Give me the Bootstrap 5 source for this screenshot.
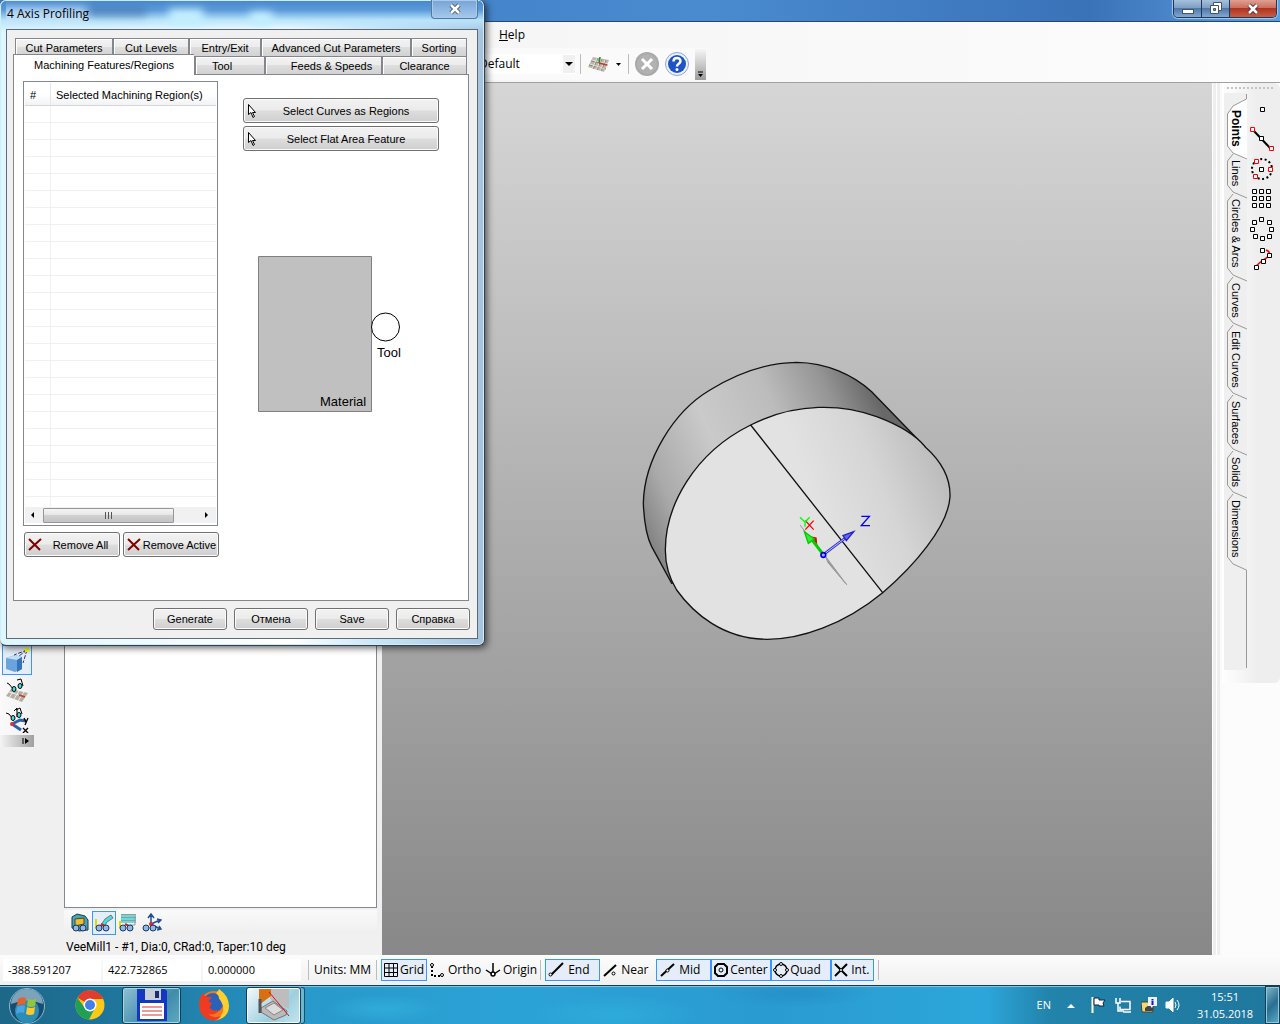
<!DOCTYPE html>
<html lang="en">
<head>
<meta charset="utf-8">
<meta name="viewport" content="width=device-width, initial-scale=1">
<title>4 Axis Profiling</title>
<link href="https://cdn.jsdelivr.net/npm/bootstrap@5.3.0/dist/css/bootstrap.min.css" rel="stylesheet">
<style>
body{font:12px/16px "Open Sans","Noto Sans",sans-serif;color:#000;background:#f0f0f0;min-height:100vh;overflow:hidden}
svg{display:block;flex:none}
button,input,select{font:inherit;color:inherit}
.plain{border:0;background:none;padding:0}
.main-title{height:22px;background:linear-gradient(90deg,#3f78bd,#4585cb 40%,#4a8bd0 55%,#3a72b8 85%,#5d9ede);border-bottom:1px solid #27456d;padding-right:3px}
.win-ctl{height:18px;border:1px solid #1f3858;border-top:0;border-radius:0 0 5px 5px;overflow:hidden;box-shadow:0 0 1px 1px #a9cbee}
.win-ctl button{border:0;padding:0;width:28px;height:17px;display:flex;align-items:center;justify-content:center;background:linear-gradient(#a6c0dc,#7f9fc4 45%,#4f77a8 50%,#82a8d2);border-right:1px solid #1f3858}
.win-ctl button:last-child{width:46px;border:0;background:linear-gradient(#dfa093,#cc6f5e 45%,#b03420 50%,#c95c42)}
.menu-row{height:26px;padding-left:499px;background:linear-gradient(90deg,#f2f2f2,#fcfcfc)}
.menu-row a{color:#000;text-decoration:none}
.tool-row{height:35px;padding-left:470px;background:linear-gradient(90deg,#f2f2f2,#fcfcfc);border-bottom:1px solid #a0a0a0}
.tool-set{height:32px;background:#fafafa}
.combo{position:relative;width:106px;height:20px}
.combo select{appearance:none;border:0;background:#fff;width:100%;height:20px;padding:0 0 0 9px;line-height:18px}
.combo svg{position:absolute;right:1px;top:1px;background:#f0f0f0;pointer-events:none}
.vsep{width:1px;background:#bdbdbd;height:20px}
.gap-left{margin-left:6px}
.overflow-tab{width:11px;height:31px;background:linear-gradient(#f6f6f6,#9c9c9c)}
.side-bar{width:35px;padding-top:562px;background:linear-gradient(90deg,#fafafa,#f0f0f0)}
.side-bar button,.view-bar button{display:flex;align-items:center;justify-content:center}
.on{border:1px solid #3399ff!important;background:#e4edf8!important}
.side-tools{padding-left:2px}
.side-bar button{width:30px;height:30px}
.grip-end{width:34px;height:12px;background:linear-gradient(90deg,#f4f4f4,#a0a0a0)}
.tree-col{width:313px;margin:0 5px 0 29px}
.tree-box{border:1px solid #828790;background:#fff}
.view-bar{height:25px;margin-top:2px;background:linear-gradient(#fafafa,#eee)}
.view-bar button{width:24px;height:24px}
.tool-info{font-family:Roboto,sans-serif;padding:4px 0 0 2px}
.scene{background:linear-gradient(#d6d6d6,#888);overflow:hidden}
.stripes{width:10px;background:linear-gradient(90deg,#fff 0 1px,#eee 1px 4px,#fff 4px 5px,#eee 5px 8px,#fafafa 8px)}
.right-dock{width:58px;background:#fcfcfc}
.dock-in{height:600px;background:linear-gradient(90deg,#fff,#eee 60%);border-radius:0 6px 6px 0}
.dots{height:2px;margin:4px 6px 4px 5px;background:repeating-linear-gradient(90deg,#c4c4c4 0 2px,transparent 2px 4px)}
.vtabs{position:relative;width:23px;height:577px;margin-left:2px;background:#efefef;font:11px/13px "Liberation Sans",sans-serif}
.vtabs>svg{position:absolute;left:0;top:0}
.vtabs button{position:relative;writing-mode:vertical-rl;width:23px;padding:6px 0 0;text-align:left;border:0;background:none;display:block;line-height:21px;white-space:nowrap}
.vtabs button:nth-of-type(1){height:61px;padding-top:17px;font-weight:700;font-size:12px}
.vtabs button:nth-of-type(2){height:39px}
.vtabs button:nth-of-type(3){height:84px}
.vtabs button:nth-of-type(4){height:48px}
.vtabs button:nth-of-type(5){height:70px}
.vtabs button:nth-of-type(6){height:56px}
.vtabs button:nth-of-type(7){height:43px}
.vtabs button:nth-of-type(8){height:76px}
.pts{padding-top:1px}
.pts button{width:30px;height:30px;display:flex;align-items:center;justify-content:center}
.status{height:30px;padding:0 0 1px 3px;background:linear-gradient(#fcfcfc,#f0f0f0)}
.coords{gap:2px;font-size:11px;margin-right:3px}
.status input{border:0;background:#fff;width:98px;height:22px;padding:0 5px}
.units{width:67px}
.snap{height:22px;border:1px solid transparent;background:none;padding:0 2px;display:flex;align-items:center;gap:2px;white-space:nowrap}
.s-free{width:55px;gap:4px}
.s-near{width:56px}
.s-ctr{width:60px;padding:0 1px;gap:1px}
.s-int{width:43px;padding:0 1px}
.taskbar{height:39px;border-top:1px solid #123c50;box-shadow:inset 0 1px #7fc4e2;background:radial-gradient(ellipse 60px 14px at 30% 60%,#30acd9,transparent),radial-gradient(ellipse 90px 20px at 48% 75%,#2eabda,transparent),radial-gradient(ellipse 80px 14px at 62% 20%,#2591c8,transparent),linear-gradient(90deg,#1d6788,#1f7aa2 12%,#2899cb 24%,#2ba2d6 40%,#2a9bd0 60%,#2ca6da 77%,#2283ab 82%,#1f779d);color:#fff}
.tb-app{width:59px;height:37px;margin-left:3px;display:flex;align-items:center;justify-content:center;border-radius:3px}
.tb-first{margin-left:14px}
.tb-open{border:1px solid #123f55;background:linear-gradient(135deg,#8fc0d4,#3f8cab 60%,#5fa9c4);box-shadow:inset 0 0 0 1px #a5d5e6}
.tb-cur{width:55px;border:1px solid #123f55;background:linear-gradient(135deg,#f4fafc,#9ecfe0 60%,#c2e6f0);box-shadow:inset 0 0 0 1px #fff}
.tb-stack{width:4px;height:37px;border:1px solid #15526d;border-left:0;border-radius:0 3px 3px 0;background:#6fb5cf}
.peek{width:15px;height:38px;border:1px solid #123f55;background:linear-gradient(135deg,#87b4c8,#286f90 50%,#5fa9c6);box-shadow:inset 0 0 0 1px #8fc7dd}
.clock{width:56px;font-size:11px;line-height:17px}
.lang{font-size:11px}

.dlg{position:absolute;left:0;top:0;width:485px;z-index:5;padding:0 6px 6px;border:solid #333f4c;border-width:0 1px 1px 0;border-radius:6px;box-shadow:2px 2px 7px rgba(0,0,0,.6),inset 0 0 0 1px #cdeefa;background:linear-gradient(#4886cc,#5b9ad9 10px,#b8e4fa 20px,transparent 32px),linear-gradient(90deg,#dff6ff,#fff 60%,#c9e6f8 78%,#a8c2dc)}
.dlg-title{height:29px;position:relative}
.dlg-title h1{font-size:12px;line-height:16px;margin:0;padding:6px 0 0 1px}
.blurs{position:absolute;left:0;top:0}
.dlg-title .dlg-x{position:absolute;right:0;top:0;width:47px;height:19px;display:flex;align-items:center;justify-content:center;border:1px solid #52799f;border-top:0;border-radius:0 0 4px 4px;background:linear-gradient(#76a3d6,#a5c9ea);box-shadow:inset 0 0 0 1px #a9cbe9}
.dlg-body{border:1px solid #5c6a76;background:#f0f0f0;padding:8px 8px 8px 6px;font:11px/14px "Liberation Sans",sans-serif}
.trow{padding:0 2px}
.trow button{border:1px solid #84868e;border-right:0;border-bottom:0;height:18px;padding:1px 0 0;background:linear-gradient(#f3f3f3,#ececec 45%,#dedede 50%,#d2d2d2);box-shadow:inset 1px 1px #fff;text-align:center;white-space:nowrap}
.trow button+button{border-left-width:2px}
.trow button:last-child{border-right:1px solid #84868e}
.trow .front{background:#fff;height:21px;margin:-2px 0 -1px -2px;position:relative;border-top:1px solid #84868e;box-shadow:none;padding:0}
.t-cut{width:97px}.t-lev{width:76px}.t-ent{width:72px}.t-adv{width:150px}.t-sort{width:57px}
.t-mach{width:181px}.t-tool{width:70px}.t-feed{width:117px}.t-clr{width:86px}
.pane{border:1px solid #84868e;background:#fff;height:527px;padding:6px 9px}
.list-box{width:195px;height:445px;border:1px solid #828790;background:#fff;padding:1px}
.list-clip{height:424px;overflow:hidden}
.list-clip table{width:100%;table-layout:fixed;border-collapse:separate;border-spacing:0}
.c-num{width:26px}
.list-clip th{height:23px;font-weight:400;padding:2px 0 0 5px;background:linear-gradient(#fff 50%,#f2f3f5);border-bottom:1px solid #d5d5d5;border-right:1px solid #e4e5e8;white-space:nowrap}
.list-clip td{height:17px;padding:0;border-bottom:1px solid #f0f0f0;border-right:1px solid #f0f0f0}
.list-clip th:last-child,.list-clip td:last-child{border-right:0}
.hbar{height:16px;background:#f1f1f1}
.thumb{width:131px;height:15px;border:1px solid #979797;border-radius:1px;background:linear-gradient(#f5f5f5,#e6e6e6 45%,#d0d0d0 50%,#c4c4c4)}
.rem-row{gap:3px;padding:6px 0 0 1px}
.w7{border:1px solid #707070;border-radius:3px;background:linear-gradient(#f2f2f2,#ebebeb 48%,#dddddd 52%,#cfcfcf);box-shadow:inset 0 0 0 1px #fbfbfb;padding:0;display:flex;align-items:center;white-space:nowrap}
.w7 span{flex:1;text-align:center}
.pick-col{gap:3px;padding-top:17px}
.w-pick{width:196px;height:25px;padding:0 3px}
.w-rem{width:96px;height:25px;padding-left:3px}
.w-foot{width:74px;height:22px}
.foot{gap:7px;padding-top:7px;margin-right:-1px}
.diagram{font:13px "Liberation Sans",sans-serif}
</style>
<script src="https://cdn.jsdelivr.net/npm/bootstrap@5.3.0/dist/js/bootstrap.bundle.min.js"></script>
</head>
<body class="d-flex flex-column">

<header>
  <div class="main-title d-flex justify-content-end align-items-start">
    <div class="win-ctl d-flex">
      <button aria-label="Minimize"><svg width="14" height="12"><rect x="1.500" y="6.500" width="11" height="4" fill="#fff" stroke="#44546a"/></svg></button>
      <button aria-label="Restore"><svg width="14" height="13"><g fill="#fff" stroke="#44546a"><path d="M4.500.5h8v8h-8z"/><path d="M1.500 3.500h8v8h-8z"/><path d="M4.500 6.500h2v2h-2z" fill="#6f90b8"/></g></svg></button>
      <button aria-label="Close"><svg width="14" height="12"><path d="M3 2l8 8M11 2l-8 8" stroke="#54303a" stroke-width="4.500"/><path d="M3 2l8 8M11 2l-8 8" stroke="#fff" stroke-width="2.500"/></svg></button>
    </div>
  </div>
  <nav class="menu-row d-flex align-items-center"><a href="#"><u>H</u>elp</a></nav>
  <div class="tool-row">
    <div class="tool-set d-inline-flex align-items-center">
      <div class="combo"><select aria-label="Style"><option>Default</option></select><svg width="12" height="18"><path d="M2 7h8l-4 4z"/></svg></div>
      <div class="vsep ms-1"></div>
      <button class="plain d-flex align-items-center gap-1 gap-left" aria-label="Work plane"><svg width="24" height="18"><path d="M6 2l16 3-5 12-16-5z" fill="#bdb8ad"/><path d="M4 6l17 4M2 10l17 4M11 3L6 14M15 4l-5 11M19 5l-5 11" stroke="#8a8578"/><path d="M5 5l16 4M3 9l15 5M10 3L5 14M14 4l-5 11M18 5l-5 11" stroke="#ece9e2" stroke-width=".8"/><path d="M12 8l8 2" stroke="#c33" stroke-width="1.500"/><path d="M12 8l1-6" stroke="#282" stroke-width="1.500"/></svg><svg width="7" height="5"><path d="M1 1h5l-2.500 3z"/></svg></button>
      <div class="vsep gap-left"></div>
      <button class="plain gap-left" aria-label="Cancel"><svg width="24" height="24"><circle cx="12" cy="12" r="12" fill="#a9a9a9"/><circle cx="12" cy="12" r="10" fill="#b2b2b2"/><path d="M7 7l10 10M17 7L7 17" stroke="#fff" stroke-width="3"/></svg></button>
      <button class="plain gap-left" aria-label="Help"><svg width="24" height="24"><circle cx="12" cy="12" r="11.500" fill="#eef2fb" stroke="#8ba6dc"/><circle cx="12" cy="12" r="9" fill="#1f52c4"/><path d="M8.500 9.500C8.500 5 15.500 5 15.500 9c0 3-3.500 2.500-3.500 5.500" fill="none" stroke="#fff" stroke-width="2.500"/><circle cx="12" cy="17.500" r="1.500" fill="#fff"/></svg></button>
      <div class="overflow-tab d-flex align-items-end justify-content-center gap-left"><svg width="7" height="10"><path d="M1 2h5" stroke="#000"/><path d="M1 4h5l-2.500 3z"/></svg></div>
    </div>
  </div>
</header>

<main class="d-flex flex-grow-1">
  <aside class="d-flex flex-column">
    <div class="side-bar">
      <div class="side-tools">
      <button class="plain on" aria-label="Perspective"><svg width="24" height="26"><path d="M1 11l9-3 7 2v12l-7 3-9-3z" fill="#6ba3dc"/><path d="M1 11l9-3 7 2-5 3z" fill="#c5def5"/><path d="M12 13l5-3v12l-5 3z" fill="#3474b8"/><path d="M22 3L9 8M22 3L14 9M22 3l-4 13" stroke="#2b2f80" stroke-dasharray="4 1.500"/><rect x="20" y="1" width="4" height="4" fill="#ff0"/></svg></button>
      <button class="plain" aria-label="View work plane"><svg width="24" height="26"><path d="M6 12l17 4-6 9-16-6z" fill="#b5afa2"/><path d="M4 15l16 5M9 13l-5 8M14 14l-5 8M19 15l-6 9" stroke="#eee"/><path d="M14 18l6 2" stroke="#c33" stroke-width="1.500"/><path d="M2 6l2 1 5 6M12 3l4-1 2 7" fill="none" stroke="#000"/><ellipse cx="9" cy="12" rx="2" ry="2.500" fill="#45dfe2" stroke="#000"/><ellipse cx="15" cy="9" rx="2" ry="2.500" fill="#45dfe2" stroke="#000"/></svg></button>
      <button class="plain" aria-label="View axes"><svg width="24" height="26"><path d="M7 17l8-4 6 1M7 17l9 6" stroke="#2f5faa" stroke-width="3" fill="none"/><path d="M1 6l3 1 4 5M11 3l4-2 2 6M12 1v9M9 4l3-3" fill="none" stroke="#000"/><ellipse cx="8" cy="11" rx="2" ry="2.500" fill="#45dfe2" stroke="#000"/><ellipse cx="14" cy="8" rx="2" ry="2.500" fill="#45dfe2" stroke="#000"/><circle cx="7" cy="17" r="2" fill="#d33"/><path d="M19 11l2 4M23 11l-3 7M18 21l5 5M23 21l-5 5" stroke="#000" stroke-width="1.300"/></svg></button>
      </div>
      <div class="grip-end d-flex align-items-center justify-content-end pe-1"><svg width="8" height="8"><path d="M1 1v6" stroke="#000"/><path d="M3 1l4 3-4 3z"/></svg></div>
    </div>
  </aside>
  <section class="tree-col d-flex flex-column">
    <div class="tree-box flex-grow-1"></div>
    <div class="view-bar d-flex align-items-center ps-1">
      <button class="plain" aria-label="Stock"><svg width="20" height="20"><path d="M2 4l5-3 8 2 3 4v10l-9 1-7-3z" fill="#4aa3b5" stroke="#173a4a"/><path d="M5 6l9-1v6l-9 2z" fill="#efc02c" stroke="#443"/><circle cx="6" cy="15" r="3" fill="#8db9ea" stroke="#235"/><circle cx="13" cy="15" r="3" fill="#8db9ea" stroke="#235"/></svg></button>
      <button class="plain on" aria-label="Toolpath"><svg width="20" height="20"><path d="M7 12l4-6 6-4 2 3-6 4-3 5z" fill="#40e0e0" stroke="#777"/><path d="M2 6v9" stroke="#e9d400" stroke-width="2"/><path d="M7 11l4 2" stroke="#c22" stroke-width="2"/><circle cx="5" cy="15" r="3" fill="#8db9ea" stroke="#235"/><circle cx="12" cy="15" r="3" fill="#8db9ea" stroke="#235"/></svg></button>
      <button class="plain" aria-label="Levels"><svg width="20" height="20"><path d="M3 3h15M3 6h15M3 9h15" stroke="#35d5da" stroke-width="1.500"/><path d="M3 1.500h15M3 4.500h15M3 7.500h15M17 3v9h-5" stroke="#999" fill="none"/><path d="M2 8v7" stroke="#e9d400" stroke-width="2"/><path d="M7 11l4 2" stroke="#c22" stroke-width="2"/><circle cx="5" cy="15" r="3" fill="#8db9ea" stroke="#235"/><circle cx="12" cy="15" r="3" fill="#8db9ea" stroke="#235"/></svg></button>
      <button class="plain" aria-label="Axes"><svg width="20" height="20"><path d="M9 12V2M9 11l9-4M9 11l9 5M6 5l3-4 3 4M15 6l4 1-3 3M15 17l4-1-2-3" stroke="#1f4d9a" stroke-width="1.500" fill="none"/><circle cx="9" cy="11" r="2" fill="#e22"/><circle cx="4" cy="15" r="3" fill="#8db9ea" stroke="#235"/><circle cx="11" cy="15" r="3" fill="#8db9ea" stroke="#235"/></svg></button>
    </div>
    <div class="tool-info text-nowrap">VeeMill1 - #1, Dia:0, CRad:0, Taper:10 deg</div>
  </section>
  <section class="scene flex-grow-1">
    <svg width="830" height="872" viewBox="382 83 830 872">
      <defs>
        <linearGradient id="wall" gradientUnits="userSpaceOnUse" x1="40" y1="520" x2="800" y2="180"><stop offset="0" stop-color="#858585"/><stop offset=".12" stop-color="#aaaaaa"/><stop offset=".35" stop-color="#cacaca"/><stop offset=".6" stop-color="#bcbcbc"/><stop offset=".8" stop-color="#959595"/><stop offset=".95" stop-color="#686868"/></linearGradient>
        <linearGradient id="cone" gradientUnits="userSpaceOnUse" x1="560" y1="470" x2="940" y2="320"><stop offset="0" stop-color="#e2e2e2"/><stop offset=".5" stop-color="#d5d5d5"/><stop offset="1" stop-color="#bababa"/></linearGradient>
      </defs>
      <svg x="630" y="350" width="340" height="300" viewBox="0 0 1020 900">
        <path d="M40 460C42 330 130 185 240 120C340 58 430 38 500 37C590 38 670 75 725 125L885 290L600 600L125 700L65 590C50 560 42 510 40 460Z" fill="url(#wall)" stroke="#111" stroke-width="4"/>
        <path d="M106 600C106 470 190 310 362 225C500 155 640 163 740 200C820 230 865 265 885 290C930 330 962 380 960 440C955 530 850 650 758 728C640 825 510 868 412 868C280 868 190 790 140 720C115 680 106 640 106 600Z" fill="#e2e2e2"/>
        <path d="M362 225C500 155 640 163 740 200C820 230 865 265 885 290C930 330 962 380 960 440C955 530 850 650 758 728Z" fill="url(#cone)"/>
        <path d="M106 600C106 470 190 310 362 225C500 155 640 163 740 200C820 230 865 265 885 290C930 330 962 380 960 440C955 530 850 650 758 728C640 825 510 868 412 868C280 868 190 790 140 720C115 680 106 640 106 600ZM362 225L758 728" fill="none" stroke="#111" stroke-width="4"/>
        <path d="M510 525l22 28" stroke="#999" stroke-width="3"/><path d="M586 618l64 86-56-66z" fill="#999" stroke="#999" stroke-width="3"/>
        <path d="M548 562l10 2 2 24z" fill="#e00" stroke="#e00" stroke-width="4"/>
        <path d="M580 614l-32-42" stroke="#0c0" stroke-width="9"/><path d="M523 545l30 22-18 13z" fill="#3e3" stroke="#0c0" stroke-width="4"/>
        <path d="M580 614l66-50" stroke="#33c" stroke-width="8"/><path d="M580 614l66-50" stroke="#bbf" stroke-width="3"/><path d="M671 545l-32 12 10 15z" fill="#66e" stroke="#22c" stroke-width="4"/>
        <circle cx="580" cy="615" r="7" fill="#aaf" stroke="#00d" stroke-width="5"/>
        <path d="M526 512l25 27M551 512l-25 27" stroke="#f00" stroke-width="4"/>
        <path d="M510 502l15 14 14-14M525 516v14" fill="none" stroke="#0f0" stroke-width="4"/>
        <path d="M694 499h24l-24 28h26" fill="none" stroke="#00f" stroke-width="4"/>
      </svg>
    </svg>
  </section>
  <div class="stripes"></div>
  <aside class="right-dock">
    <div class="dock-in d-flex flex-column">
      <div class="dots"></div>
      <div class="d-flex">
        <div class="vtabs" role="tablist">
          <svg width="23" height="577" fill="none" stroke="#999"><path d="M22.500 1v5L9 13 3.500 21v32L9 60l14 7V1z" fill="#fff" stroke="none"/><path d="M22.500 1v5L9 13 3.500 21v32L9 60l14 6M9 61l-5.500 7v24L9 99l14 6M9 101l-5.500 7v67L9 182l14 6M9 184l-5.500 7v32L9 230l14 6M9 232l-5.500 7v54L9 300l14 6M9 302l-5.500 7v40L9 356l14 6M9 358l-5.500 7v27L9 399l14 6M9 401l-5.500 7v56L9 471l13.500 6v98"/></svg>
          <button role="tab">Points</button><button role="tab">Lines</button><button role="tab">Circles &amp; Arcs</button><button role="tab">Curves</button><button role="tab">Edit Curves</button><button role="tab">Surfaces</button><button role="tab">Solids</button><button role="tab">Dimensions</button>
        </div>
        <div class="pts">
          <button class="plain" aria-label="Point"><svg width="24" height="24"><path d="M10.500 10.500h4v4h-4z" fill="#fff" stroke="#000"/></svg></button>
          <button class="plain" aria-label="Points on line"><svg width="24" height="24"><path d="M3 3l18 19" stroke="#000" stroke-width="2"/><g fill="#fff"><path d="M.5.5h4v4h-4zM19.500 19.500h4v4h-4z" stroke="red"/><path d="M9.500 9.500h4v4h-4z" stroke="#000"/></g></svg></button>
          <button class="plain" aria-label="Circle center"><svg width="24" height="24"><circle cx="12" cy="12" r="10" fill="none" stroke="#000" stroke-width="2" stroke-dasharray="2 2.500"/><g fill="#fff"><path d="M4.500 2.500h4v4h-4zM3.500 17.500h4v4h-4zM18.500 10.500h4v4h-4z" stroke="red"/><path d="M9.500 10.500h4v4h-4z" stroke="#000"/></g></svg></button>
          <button class="plain" aria-label="Point grid"><svg width="24" height="24"><path d="M2.500 2.500h4v4h-4zM9.500 2.500h4v4h-4zM16.500 2.500h4v4h-4zM2.500 9.500h4v4h-4zM9.500 9.500h4v4h-4zM16.500 9.500h4v4h-4zM2.500 16.500h4v4h-4zM9.500 16.500h4v4h-4zM16.500 16.500h4v4h-4z" fill="#fff" stroke="#000"/></svg></button>
          <button class="plain" aria-label="Point ring"><svg width="24" height="24"><path d="M9.500.5h4v4h-4zM2.500 3.500h4v4h-4zM17.500 3.500h4v4h-4zM.5 10.500h4v4h-4zM19.500 10.500h4v4h-4zM3.500 17.500h4v4h-4zM10.500 19.500h4v4h-4zM17.500 17.500h4v4h-4z" fill="#fff" stroke="#000"/></svg></button>
          <button class="plain" aria-label="Points on curve"><svg width="24" height="24"><path d="M6 19l7-6c8-4 8-8 3-10" fill="none" stroke="red" stroke-width="1.500"/><path d="M10.500 1.500h4v4h-4zM17.500 6.500h4v4h-4zM11.500 12.500h4v4h-4zM4.500 18.500h4v4h-4z" fill="#fff" stroke="#000"/></svg></button>
        </div>
      </div>
    </div>
  </aside>
</main>

<div class="status d-flex align-items-center">
  <div class="coords d-flex">
    <input aria-label="X" value="-388.591207" readonly><input aria-label="Y" value="422.732865" readonly><input aria-label="Z" value="0.000000" readonly>
  </div>
  <span class="vsep ms-1"></span>
  <span class="units text-center text-nowrap">Units: MM</span>
  <span class="vsep me-1"></span>
  <button class="snap on"><svg width="14" height="14" fill="none" stroke="#000"><path d="M.5.5h13v13H.5zM5 0v14M9.500 0v14M0 5h14M0 9.500h14"/></svg>Grid</button>
  <button class="snap s-free"><svg width="14" height="14"><path d="M2 3v10h11" fill="none" stroke="#000" stroke-width="2" stroke-dasharray="2 2"/><circle cx="2" cy="2" r="1.500" fill="#fff" stroke="#000"/><circle cx="12" cy="12" r="1.500" fill="#fff" stroke="#000"/></svg>Ortho</button>
  <button class="snap"><svg width="16" height="14" fill="none" stroke="#000" stroke-width="1.500"><path d="M8 0v11M1 7l6 4M15 7l-6 4"/><circle cx="8" cy="11" r="2" fill="#fff"/></svg>Origin</button>
  <span class="vsep me-1"></span>
  <button class="snap s-free on"><svg width="16" height="16" stroke="#000"><path d="M3 13L15 1" stroke-width="2"/><circle cx="2.500" cy="12.500" r="1.500" fill="#fff"/></svg>End</button>
  <button class="snap s-near"><svg width="16" height="16" stroke="#000"><path d="M1 14L13 3" stroke-width="2"/><circle cx="10.500" cy="11.500" r="1.500" fill="#fff"/></svg>Near</button>
  <button class="snap s-free on"><svg width="16" height="16" stroke="#000"><path d="M2 14L15 2" stroke-width="2"/><circle cx="8.500" cy="8.500" r="1.500" fill="#fff"/></svg>Mid</button>
  <button class="snap s-ctr on"><svg width="16" height="16" fill="none" stroke="#000"><path d="M5 2h6l3 3v6l-3 3H5l-3-3V5z" stroke-width="2"/><circle cx="8" cy="8" r="2"/></svg>Center</button>
  <button class="snap s-ctr on"><svg width="16" height="16" fill="#fff" stroke="#000"><circle cx="8" cy="8" r="6" stroke-width="1.500" fill="none"/><circle cx="8" cy="2" r="1.500"/><circle cx="8" cy="14" r="1.500"/><circle cx="2" cy="8" r="1.500"/><circle cx="14" cy="8" r="1.500"/></svg>Quad</button>
  <button class="snap s-int on"><svg width="16" height="16" stroke="#000"><path d="M2 2l12 12M14 2L2 14" stroke-width="2"/><circle cx="8" cy="8" r="1.500" fill="#fff"/></svg>Int.</button>
  <span class="vsep ms-1"></span>
</div>

<footer class="taskbar d-flex align-items-center">
  <button class="plain ms-2" aria-label="Start"><svg width="38" height="37"><circle cx="19" cy="19" r="17.500" fill="#174e70" stroke="#8fb9cc"/><circle cx="19" cy="24" r="12" fill="#2b8db4"/><path d="M3 17a16 15 0 0 1 32 0q-16-7-32 0z" fill="#7da3b8"/><path d="M10 12q4-3 8-1l-1 7q-4-2-8 1z" fill="#e8602c"/><path d="M20 12q4 2 8 0l-1 7q-4 2-8 0z" fill="#95c53a"/><path d="M9 20q4-3 8-1l-1 7q-4-2-8 1z" fill="#4ba6e0"/><path d="M19 20q4 2 8 0l-1 7q-4 2-8 0z" fill="#fbc92c"/></svg></button>
  <div class="tb-app tb-first"><svg width="30" height="30"><circle cx="15" cy="15" r="14.500" fill="#fbc916"/><path d="M15 15L2.400 7.700A14.500 14.500 0 0 1 28.300 9H15z" fill="#e33b2e"/><path d="M2.400 7.700A14.500 14.500 0 0 0 14 29.500L20 18l-5 3-5-3z" fill="#1fa055"/><circle cx="15" cy="15" r="6.500" fill="#fff"/><circle cx="15" cy="15" r="5" fill="#437fe8"/></svg></div>
  <div class="tb-app tb-open"><svg width="32" height="32"><path d="M1 0h28l2 2v30H1z" fill="#1436c0"/><path d="M9 0h16v11H9z" fill="#c7cdd8"/><path d="M19 2h4v7h-4z" fill="#1b2b70"/><path d="M4 14h24v16H4z" fill="#fff"/><path d="M6 18h20M6 22h20M6 26h20" stroke="#d33"/></svg></div>
  <div class="tb-app"><svg width="32" height="32"><circle cx="16" cy="16" r="14" fill="#f5761b"/><circle cx="15" cy="14" r="10" fill="#2a62bb"/><path d="M18 4q3-3 3-4 10 7 10 17 0 12-14 14.500 10-6 8-15-2-5-4-7 0-3-3-5.500z" fill="#ffd02c"/><path d="M1 16Q1 8 5 4q1 3 4 4 3-1 5 1-4 2-3 4 3 0 3 2-3 2-2 4 3 4 9 2-4 6-11 4 5 5 13 2-3 4.500-8 4.500Q2 30 1 16z" fill="#ee3c22"/></svg></div>
  <div class="tb-app tb-cur"><svg width="34" height="34"><path d="M10 1h22v20L14 12z" fill="#bdbdbd"/><path d="M2 1h12v7L2 17z" fill="#d9700f"/><path d="M4 20l12-7 14 10-1 4-12 5L4 24z" fill="#bababa" stroke="#777"/><path d="M8 20l9-5 9 7-9 5z" fill="#dcdcdc" stroke="#888"/><path d="M3 11v14" stroke="#555" stroke-width="3"/><path d="M12 4l20 24" stroke="#d11"/></svg></div>
  <div class="tb-stack"></div>
  <div class="ms-auto d-flex align-items-center">
    <span class="lang me-3">EN</span>
    <svg width="8" height="10"><path d="M0 8l4-4 4 4z" fill="#fff"/></svg>
    <svg class="ms-3" width="16" height="16"><path d="M1.500 0v16" stroke="#fff" stroke-width="2"/><path d="M3 1h5v2h6l-2 3 1 3H8V8H3z" fill="#fff" stroke="#124"/></svg>
    <svg class="ms-2" width="18" height="16" fill="none" stroke="#fff"><path d="M6 4.500h9v8H5v-3" stroke-width="1.500"/><path d="M1 1v5h4V1M3 6v8h6M8 15h8" stroke-width="1.500"/></svg>
    <svg class="ms-2" width="16" height="16"><path d="M0 5h12v10H1z" fill="#f0d778" stroke="#443"/><path d="M4 11l4-3 4 3v3H4z" fill="#444"/><path d="M7 0h9v9h-4l-2 2V9H7z" fill="#eef"/><path d="M11.500 2v1.500M11.500 4v4" stroke="#12a" stroke-width="2"/></svg>
    <svg class="ms-2 me-3" width="16" height="16" fill="none" stroke="#fff"><path d="M1 5h3l4-4v14l-4-4H1z" fill="#fff"/><path d="M10 5q2 3 0 6M12 3q4 5 0 10"/></svg>
    <div class="clock text-center"><div>15:51</div><div>31.05.2018</div></div>
    <div class="ms-2 ps-1"><div class="peek"></div></div>
  </div>
</footer>

<div class="dlg" role="dialog" aria-labelledby="dt">
  <div class="dlg-title">
    <svg class="blurs" width="420" height="28"><filter id="b" x="-50%" y="-80%" width="200%" height="260%"><feGaussianBlur stdDeviation="4"/></filter><g filter="url(#b)"><path d="M80 7h60v10H80z" fill="#3b6ba5" opacity=".5"/><path d="M-6 7h86v14H-6z" fill="#c8e4fa" opacity=".8"/><path d="M163 9h34v16h-34zM244 12h22v14h-22z" fill="#c3efff"/></g></svg>
    <h1 class="fw-normal position-relative" id="dt">4 Axis Profiling</h1>
    <button class="plain dlg-x" aria-label="Close"><svg width="14" height="12"><path d="M3 2l8 8M11 2l-8 8" stroke="#445872" stroke-width="4.500"/><path d="M3 2l8 8M11 2l-8 8" stroke="#fff" stroke-width="2.500"/></svg></button>
  </div>
  <div class="dlg-body">
    <div class="trow d-flex" role="tablist">
      <button role="tab" class="t-cut">Cut Parameters</button><button role="tab" class="t-lev">Cut Levels</button><button role="tab" class="t-ent">Entry/Exit</button><button role="tab" class="t-adv">Advanced Cut Parameters</button><button role="tab" class="t-sort">Sorting</button>
    </div>
    <div class="trow d-flex" role="tablist">
      <button class="front t-mach" role="tab" aria-selected="true">Machining Features/Regions</button><button role="tab" class="t-tool pe-3">Tool</button><button role="tab" class="t-feed ps-3">Feeds &amp; Speeds</button><button role="tab" class="t-clr">Clearance</button>
    </div>
    <div class="pane d-flex">
      <div>
        <div class="list-box">
          <div class="list-clip">
            <table>
              <colgroup><col class="c-num"><col></colgroup>
              <thead><tr><th>#</th><th>Selected Machining Region(s)</th></tr></thead>
              <tbody><tr><td></td><td></td></tr><tr><td></td><td></td></tr><tr><td></td><td></td></tr><tr><td></td><td></td></tr><tr><td></td><td></td></tr><tr><td></td><td></td></tr><tr><td></td><td></td></tr><tr><td></td><td></td></tr><tr><td></td><td></td></tr><tr><td></td><td></td></tr><tr><td></td><td></td></tr><tr><td></td><td></td></tr><tr><td></td><td></td></tr><tr><td></td><td></td></tr><tr><td></td><td></td></tr><tr><td></td><td></td></tr><tr><td></td><td></td></tr><tr><td></td><td></td></tr><tr><td></td><td></td></tr><tr><td></td><td></td></tr><tr><td></td><td></td></tr><tr><td></td><td></td></tr><tr><td></td><td></td></tr><tr><td></td><td></td></tr></tbody>
            </table>
          </div>
          <div class="hbar d-flex align-items-center">
            <svg width="18" height="8"><path d="M9 1v6L6 4z"/></svg>
            <div class="thumb d-flex align-items-center justify-content-center"><svg width="8" height="7"><path d="M.5 0v7M3.500 0v7M6.500 0v7" stroke="#555"/></svg></div>
            <svg class="ms-auto" width="12" height="8"><path d="M1 1v6l3-3z"/></svg>
          </div>
        </div>
        <div class="rem-row d-flex">
          <button class="w7 w-rem"><svg width="14" height="13"><path d="M1 1l11 11M13 1L1 12" stroke="#800000" stroke-width="2"/></svg><span>Remove All</span></button>
          <button class="w7 w-rem"><svg width="14" height="13"><path d="M1 1l11 11M13 1L1 12" stroke="#800000" stroke-width="2"/></svg><span>Remove Active</span></button>
        </div>
      </div>
      <div class="pick-col ms-4 d-flex flex-column">
        <button class="w7 w-pick"><svg width="10" height="16"><path d="M1.500 1.500v10l2.500-2 2 5 1.500-1-2-4h3z" fill="#fff" stroke="#000"/></svg><span>Select Curves as Regions</span></button>
        <button class="w7 w-pick"><svg width="10" height="16"><path d="M1.500 1.500v10l2.500-2 2 5 1.500-1-2-4h3z" fill="#fff" stroke="#000"/></svg><span>Select Flat Area Feature</span></button>
        <svg class="diagram" width="160" height="260"><path d="M15.500 102.500h113v155h-113z" fill="#c0c0c0" stroke="#808080"/><circle cx="142.500" cy="173" r="14" fill="#fff" stroke="#000"/><text x="134" y="203">Tool</text><text x="77" y="252">Material</text></svg>
      </div>
    </div>
    <div class="foot d-flex justify-content-end">
      <button class="w7 w-foot"><span>Generate</span></button><button class="w7 w-foot"><span>Отмена</span></button><button class="w7 w-foot"><span>Save</span></button><button class="w7 w-foot"><span>Справка</span></button>
    </div>
  </div>
</div>
</body>
</html>
